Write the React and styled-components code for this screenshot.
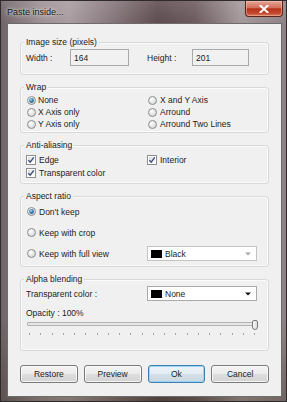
import React from "react";
import styled, { createGlobalStyle } from "styled-components";

const Global = createGlobalStyle`
  html, body { margin: 0; padding: 0; background: #ffffff; }
  body { font-family: "Liberation Sans", Arial, sans-serif; }
`;

const Window = styled.div`
  width: 287px;
  height: 402px;
  box-sizing: border-box;
  display: flex;
  flex-direction: column;
  border: 1px solid #2f2a2b;
  background:
    linear-gradient(180deg, rgba(255,255,255,0.12) 0%, rgba(0,0,0,0) 6%, rgba(0,0,0,0) 80%, rgba(60,50,30,0.35) 100%),
    linear-gradient(90deg, #6e6367 0%, #9c8f94 14%, #a89ba0 24%, #86777c 38%, #5c4a4d 55%, #6a595c 68%, #a3979a 84%, #8c8084 100%);
  font-family: "Liberation Sans", Arial, sans-serif;
  font-size: 8.5px;
  color: #1c1c1c;
`;

const TitleBar = styled.div`
  height: 22px;
  display: flex;
  align-items: center;
  justify-content: space-between;
`;

const Title = styled.span`
  padding-left: 6px;
  font-size: 9px;
  color: #111;
  text-shadow: 0 0 5px rgba(255,255,255,0.85), 0 0 2px rgba(255,255,255,0.6);
`;

const CloseButton = styled.div`
  align-self: flex-start;
  width: 38px;
  height: 16px;
  margin-right: 3px;
  box-sizing: border-box;
  border: 1px solid #5a2419;
  border-top: none;
  border-radius: 0 0 4px 4px;
  background: linear-gradient(180deg, #e3a595 0%, #d2705d 45%, #b9321b 52%, #c0472e 80%, #d9785c 100%);
  box-shadow: inset 0 0 0 1px rgba(255,210,190,0.45);
  display: flex;
  align-items: center;
  justify-content: center;
`;

const Client = styled.div`
  flex: 1;
  margin: 0 4px 4px 6px;
  border: 1px solid #6c6c6c;
  background: #f0f0f0;
  padding: 13px 12px 13px 12px;
  display: flex;
  flex-direction: column;
  gap: 7px;
`;

const Group = styled.fieldset`
  margin: 0;
  min-width: 0;
  padding: ${p => p.$pt}px 4px ${p => p.$pb}px 5px;
  border: 1px solid #d5d9dc;
  border-radius: 3px;
  box-shadow: inset 0 0 0 1px #fbfbfb;
`;

const Legend = styled.legend`
  padding: 0 2px;
  margin-left: -2px;
  line-height: 10px;
  font-size: 8.5px;
  background: #f0f0f0;
  color: #1c1c1c;
`;

const SizeRow = styled.div`
  display: grid;
  grid-template-columns: 121px 1fr;
  height: 17px;
`;

const SizeField = styled.div`
  display: flex;
  align-items: center;
`;

const FieldLabel = styled.span`
  width: ${p => p.$w}px;
  line-height: 10px;
`;

const ReadBox = styled.div`
  width: ${p => p.$w}px;
  height: 17px;
  box-sizing: border-box;
  border: 1px solid #a7a9ab;
  background: #f1f1f1;
  padding-left: 3px;
  display: flex;
  align-items: center;
  line-height: 10px;
`;

const OptionGrid = styled.div`
  display: grid;
  grid-template-columns: 121px 1fr;
  grid-template-rows: repeat(${p => p.$rows}, ${p => p.$rowH}px);
  grid-auto-flow: ${p => p.$flow};
`;

const OptionItem = styled.label`
  display: flex;
  align-items: center;
  gap: ${p => p.$gap}px;
  margin-left: ${p => p.$ml}px;
  line-height: 10px;
  white-space: nowrap;
`;

const Stack = styled.div`
  display: flex;
  flex-direction: column;
`;

const LineRow = styled.div`
  display: flex;
  align-items: center;
  height: ${p => p.$h}px;
`;

const LeadCell = styled.div`
  width: 121px;
  display: flex;
  align-items: center;
`;

const Combo = styled.div`
  width: 110px;
  height: 15px;
  box-sizing: border-box;
  border: 1px solid ${p => (p.$dim ? "#c3c3c3" : "#a9a9a9")};
  background: #ffffff;
  display: flex;
  align-items: center;
  padding: 0 5px 0 3px;
  gap: 3px;
  line-height: 10px;
`;

const Swatch = styled.span`
  width: 11px;
  height: 8px;
  background: #000;
  flex: none;
`;

const ComboText = styled.span`
  flex: 1;
`;

const Caption = styled.div`
  line-height: 10px;
  margin-top: ${p => p.$mt || 0}px;
`;

const Slider = styled.div`
  position: relative;
  height: 22px;
  width: 232px;
  margin-left: 1px;
`;

const Track = styled.div`
  margin-top: 4px;
  width: 228px;
  height: 4px;
  box-sizing: border-box;
  border: 1px solid #b3b3b3;
  border-radius: 1px;
  background: #e6e6e6;
`;

const Thumb = styled.div`
  position: absolute;
  left: 225px;
  top: 2px;
  width: 6px;
  height: 10px;
  box-sizing: border-box;
  border: 1px solid #7a7a7a;
  border-radius: 2px 2px 3px 3px;
  background: linear-gradient(90deg, #fafafa, #dcdcdc);
`;

const Ticks = styled.div`
  margin-top: 7px;
  margin-left: 2px;
  width: 226px;
  display: flex;
  justify-content: space-between;
`;

const Tick = styled.span`
  width: 1px;
  height: 2px;
  background: #a4a4a4;
`;

const ButtonRow = styled.div`
  margin-top: 7px;
  display: grid;
  grid-template-columns: repeat(4, 1fr);
  gap: 6px;
`;

const Button = styled.div`
  height: 18px;
  box-sizing: border-box;
  border: 1px solid ${p => (p.$default ? "#3c7fb1" : "#7a7a7a")};
  border-radius: 3px;
  background: ${p =>
    p.$default
      ? "linear-gradient(180deg, #eef5f9 0%, #e3ecf2 48%, #d4e0e9 52%, #cad8e3 100%)"
      : "linear-gradient(180deg, #f4f4f4 0%, #ececec 48%, #dedede 52%, #d3d3d3 100%)"};
  box-shadow: inset 0 0 0 1px ${p => (p.$default ? "#9ed3f2" : "rgba(255,255,255,0.75)")};
  display: flex;
  align-items: center;
  justify-content: center;
  font-size: 8.5px;
  color: #1c1c1c;
`;

const Radio = ({ checked }) => (
  <svg width="9" height="9" viewBox="0 0 9 9" style={{ flex: "none" }}>
    <defs>
      <radialGradient id="rfill" cx="40%" cy="35%" r="70%">
        <stop offset="0" stopColor="#ffffff" />
        <stop offset="1" stopColor="#cfd2d4" />
      </radialGradient>
      <radialGradient id="rdot" cx="40%" cy="35%" r="70%">
        <stop offset="0" stopColor="#a9def8" />
        <stop offset="0.5" stopColor="#3f87b8" />
        <stop offset="1" stopColor="#184d74" />
      </radialGradient>
    </defs>
    <circle cx="4.5" cy="4.5" r="4" fill="url(#rfill)" stroke="#8c8e90" strokeWidth="1" />
    {checked && <circle cx="4.5" cy="4.5" r="2.4" fill="url(#rdot)" />}
  </svg>
);

const Check = ({ checked }) => (
  <svg width="10" height="10" viewBox="0 0 10 10" style={{ flex: "none" }}>
    <defs>
      <linearGradient id="cfill" x1="0" y1="0" x2="1" y2="1">
        <stop offset="0" stopColor="#dcdcdc" />
        <stop offset="1" stopColor="#ffffff" />
      </linearGradient>
    </defs>
    <rect x="0.5" y="0.5" width="9" height="9" fill="#fff" stroke="#8c8e90" />
    <rect x="2" y="2" width="6" height="6" fill="url(#cfill)" />
    {checked && (
      <path d="M2.3 5.1 L4.2 7.2 L7.8 2.4" fill="none" stroke="#3b4f7a" strokeWidth="1.4" />
    )}
  </svg>
);

const Arrow = ({ dim }) => (
  <svg width="6" height="4" viewBox="0 0 6 4" style={{ flex: "none" }}>
    <path d="M0 0.5 H6 L3 3.5 Z" fill={dim ? "#a8a8a8" : "#111"} />
  </svg>
);

const wrapOptions = ["None", "X Axis only", "Y Axis only", "X and Y Axis", "Arround", "Arround Two Lines"];

export default function App() {
  return (
    <>
      <Global />
      <Window>
        <TitleBar>
          <Title>Paste inside...</Title>
          <CloseButton>
            <svg width="10" height="8" viewBox="0 0 10 8">
              <path d="M1.5 0.8 L8.5 7.2 M8.5 0.8 L1.5 7.2" stroke="#ffffff" strokeWidth="2" strokeLinecap="square" />
            </svg>
          </CloseButton>
        </TitleBar>
        <Client>
          <Group $pt={2} $pb={8}>
            <Legend>Image size (pixels)</Legend>
            <SizeRow>
              <SizeField>
                <FieldLabel $w={44}>Width :</FieldLabel>
                <ReadBox $w={59}>164</ReadBox>
              </SizeField>
              <SizeField>
                <FieldLabel $w={45}>Height :</FieldLabel>
                <ReadBox $w={57}>201</ReadBox>
              </SizeField>
            </SizeRow>
          </Group>

          <Group $pt={2} $pb={2}>
            <Legend>Wrap</Legend>
            <OptionGrid $rows={3} $rowH={12} $flow="column">
              {wrapOptions.map((o, i) => (
                <OptionItem key={o} $gap={i < 3 ? 2 : 3} $ml={1}>
                  <Radio checked={i === 0} />
                  {o}
                </OptionItem>
              ))}
            </OptionGrid>
          </Group>

          <Group $pt={3} $pb={4}>
            <Legend>Anti-aliasing</Legend>
            <OptionGrid $rows={2} $rowH={13} $flow="row">
              <OptionItem $gap={3} $ml={0}>
                <Check checked />
                Edge
              </OptionItem>
              <OptionItem $gap={3} $ml={0}>
                <Check checked />
                Interior
              </OptionItem>
              <OptionItem $gap={3} $ml={0}>
                <Check checked />
                Transparent color
              </OptionItem>
            </OptionGrid>
          </Group>

          <Group $pt={0} $pb={2}>
            <Legend>Aspect ratio</Legend>
            <Stack>
              <LineRow $h={21}>
                <OptionItem $gap={3} $ml={1}>
                  <Radio checked />
                  Don't keep
                </OptionItem>
              </LineRow>
              <LineRow $h={21}>
                <OptionItem $gap={3} $ml={1}>
                  <Radio />
                  Keep with crop
                </OptionItem>
              </LineRow>
              <LineRow $h={21}>
                <LeadCell>
                  <OptionItem $gap={3} $ml={1}>
                    <Radio />
                    Keep with full view
                  </OptionItem>
                </LeadCell>
                <Combo $dim>
                  <Swatch />
                  <ComboText>Black</ComboText>
                  <Arrow dim />
                </Combo>
              </LineRow>
            </Stack>
          </Group>

          <Group $pt={2} $pb={10}>
            <Legend>Alpha blending</Legend>
            <Stack>
              <LineRow $h={15}>
                <LeadCell>Transparent color :</LeadCell>
                <Combo>
                  <Swatch />
                  <ComboText>None</ComboText>
                  <Arrow />
                </Combo>
              </LineRow>
              <Caption $mt={7}>Opacity : 100%</Caption>
              <Slider>
                <Track />
                <Thumb />
                <Ticks>
                  {Array.from({ length: 21 }, (_, i) => (
                    <Tick key={i} />
                  ))}
                </Ticks>
              </Slider>
            </Stack>
          </Group>

          <ButtonRow>
            <Button>Restore</Button>
            <Button>Preview</Button>
            <Button $default>Ok</Button>
            <Button>Cancel</Button>
          </ButtonRow>
        </Client>
      </Window>
    </>
  );
}
